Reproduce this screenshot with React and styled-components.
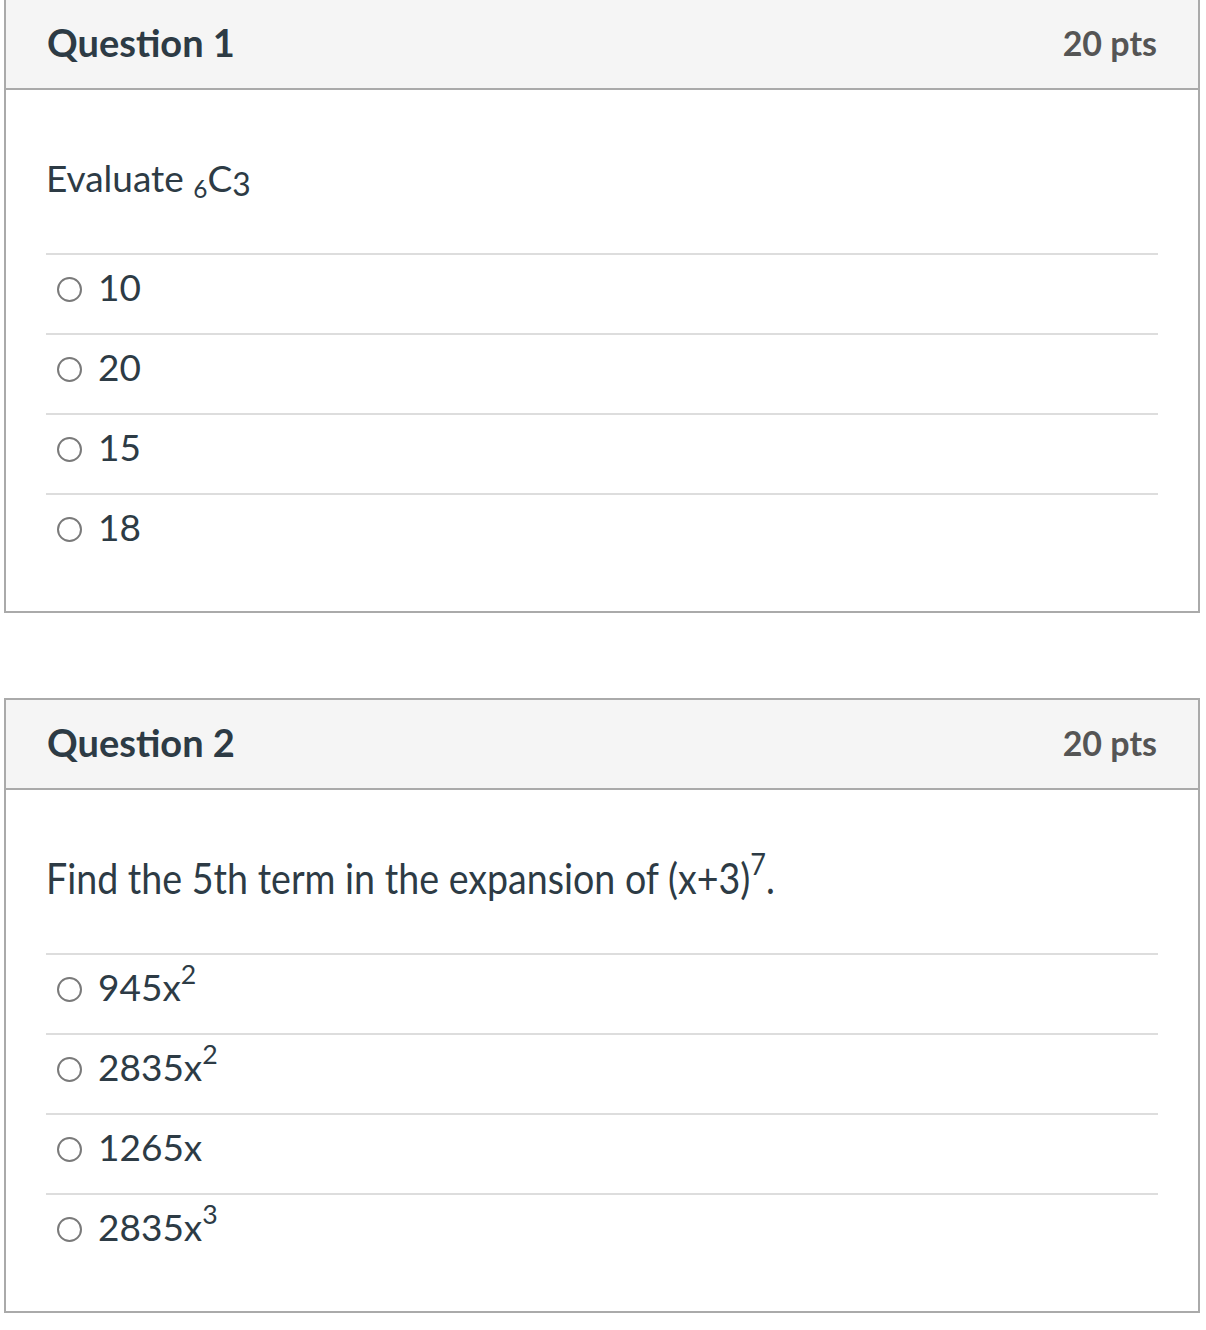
import React from 'react';
import styled, { createGlobalStyle } from 'styled-components';

const GlobalStyle = createGlobalStyle`
  body {
    margin: 0;
    background: #ffffff;
    font-family: Lato, "Liberation Sans", sans-serif;
    color: #2d3b45;
  }
`;

const Page = styled.div`
  padding: 0 6px 20px 4px;
  display: flex;
  flex-direction: column;
  gap: 85px;
`;

const Card = styled.section`
  border: 2px solid #aaaaaa;
  margin-top: ${(p) => (p.$first ? '-2px' : '0')};
`;

const Header = styled.header`
  height: 90px;
  box-sizing: border-box;
  background: #f5f5f5;
  border-bottom: 2px solid #aaaaaa;
  display: flex;
  align-items: center;
  justify-content: space-between;
  padding: 0 41px 4px;
`;

const Title = styled.h2`
  margin: 0;
  font-size: 38px;
  font-weight: 700;
  color: #2d3b45;
`;

const Points = styled.div`
  font-size: 34px;
  font-weight: 700;
  color: #555555;
`;

const Body = styled.div`
  padding: 61px 40px 38px;
`;

const QuestionText = styled.div`
  height: 54px;
  line-height: 54px;
  font-size: ${(p) => p.$size || 37}px;
  white-space: nowrap;
  transform: scaleX(${(p) => p.$squeeze || 1});
  transform-origin: left center;
  margin-bottom: 48px;
`;

const Low = styled.span`
  font-size: ${(p) => p.$size}em;
  vertical-align: ${(p) => p.$drop}px;
`;

const Sup = styled.sup`
  font-size: 0.72em;
  line-height: 0;
  vertical-align: 0.62em;
`;

const Options = styled.ul`
  list-style: none;
  margin: 0;
  padding: 0;
`;

const Option = styled.li`
  height: 78px;
  box-sizing: content-box;
  border-top: 2px solid #dddddd;
  display: flex;
  align-items: center;
  padding: 0 0 0 11px;
  gap: 16px;
  font-size: 37px;
  color: #2d3b45;

  & > span:last-child {
    margin-top: -16px;
  }
`;

const Radio = styled.span`
  width: 25px;
  height: 25px;
  box-sizing: border-box;
  border: 2px solid #7a7a7a;
  border-radius: 50%;
  flex-shrink: 0;
  margin-top: -10px;
`;

const Choice = ({ children }) => (
  <Option>
    <Radio />
    <span>{children}</span>
  </Option>
);

export default function App() {
  return (
    <>
      <GlobalStyle />
      <Page>
        <Card $first>
          <Header>
            <Title>Question 1</Title>
            <Points>20 pts</Points>
          </Header>
          <Body>
            <QuestionText>
              Evaluate <Low $size={0.66} $drop={-6}>6</Low>C<Low $size={0.86} $drop={-4}>3</Low>
            </QuestionText>
            <Options>
              <Choice>10</Choice>
              <Choice>20</Choice>
              <Choice>15</Choice>
              <Choice>18</Choice>
            </Options>
          </Body>
        </Card>

        <Card>
          <Header>
            <Title>Question 2</Title>
            <Points>20 pts</Points>
          </Header>
          <Body>
            <QuestionText $size={42} $squeeze={0.895}>
              Find the 5th term in the expansion of (x+3)<Sup>7</Sup>.
            </QuestionText>
            <Options>
              <Choice>945x<Sup>2</Sup></Choice>
              <Choice>2835x<Sup>2</Sup></Choice>
              <Choice>1265x</Choice>
              <Choice>2835x<Sup>3</Sup></Choice>
            </Options>
          </Body>
        </Card>
      </Page>
    </>
  );
}
